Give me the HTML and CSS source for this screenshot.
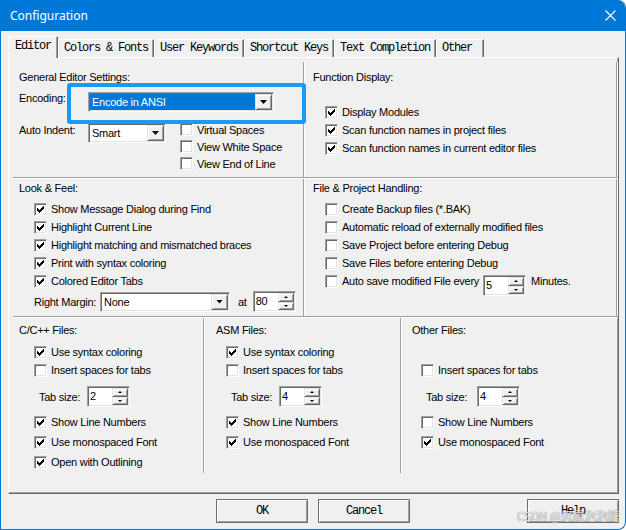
FILE: index.html
```html
<!DOCTYPE html>
<html>
<head>
<meta charset="utf-8">
<title>Configuration</title>
<link rel="stylesheet" href="styles.css">
</head>
<body>
<svg class="defs" width="0" height="0">
    <symbol id="tick" viewBox="0 0 13 13">
        <path d="M3 5h1v1h1v1h1v-1h1v-1h1v-1h1v-1h1v3h-1v1h-1v1h-1v1h-1v1h-1v-1h-1v-1h-1z"/>
    </symbol>
</svg>
<div class="window">
    <div class="titlebar">
        <span>Configuration</span>
        <svg class="close" width="11" height="11" viewBox="0 0 11 11"><path d="M0.5 0.5L10.5 10.5M10.5 0.5L0.5 10.5"/></svg>
    </div>
    <div class="tabs">
        <div class="tab active">Editor</div>
        <div class="tab">Colors &amp; Fonts</div>
        <div class="tab">User Keywords</div>
        <div class="tab">Shortcut Keys</div>
        <div class="tab">Text Completion</div>
        <div class="tab last">Other</div>
    </div>
    <div class="page">
        <div class="row row-top">
            <div class="cell half-left general">
                <div class="heading">General Editor Settings:</div>
                <div class="field enc">
                    <span class="lbl">Encoding:</span>
                    <div class="combo w-enc"><span class="combo-val sel">Encode in ANSI</span><span class="drop"><i class="arrow"></i></span></div>
                </div>
                <div class="field indent">
                    <span class="lbl">Auto Indent:</span>
                    <div class="combo w-indent"><span class="combo-val">Smart</span><span class="drop"><i class="arrow"></i></span></div>
                    <div class="opts tight">
                        <div class="opt"><span class="cb"></span>Virtual Spaces</div>
                        <div class="opt"><span class="cb"></span>View White Space</div>
                        <div class="opt"><span class="cb"></span>View End of Line</div>
                    </div>
                </div>
            </div>
            <div class="cell half-right funcs">
                <div class="heading">Function Display:</div>
                <div class="opts">
                    <div class="opt"><span class="cb"><svg viewBox="0 0 13 13"><use href="#tick"/></svg></span>Display Modules</div>
                    <div class="opt"><span class="cb"><svg viewBox="0 0 13 13"><use href="#tick"/></svg></span>Scan function names in project files</div>
                    <div class="opt"><span class="cb"><svg viewBox="0 0 13 13"><use href="#tick"/></svg></span>Scan function names in current editor files</div>
                </div>
            </div>
        </div>
        <div class="row row-mid">
            <div class="cell half-left look">
                <div class="heading">Look &amp; Feel:</div>
                <div class="opts">
                    <div class="opt"><span class="cb"><svg viewBox="0 0 13 13"><use href="#tick"/></svg></span>Show Message Dialog during Find</div>
                    <div class="opt"><span class="cb"><svg viewBox="0 0 13 13"><use href="#tick"/></svg></span>Highlight Current Line</div>
                    <div class="opt"><span class="cb"><svg viewBox="0 0 13 13"><use href="#tick"/></svg></span>Highlight matching and mismatched braces</div>
                    <div class="opt"><span class="cb"><svg viewBox="0 0 13 13"><use href="#tick"/></svg></span>Print with syntax coloring</div>
                    <div class="opt"><span class="cb"><svg viewBox="0 0 13 13"><use href="#tick"/></svg></span>Colored Editor Tabs</div>
                </div>
                <div class="margin-line">
                    <span class="lbl">Right Margin:</span>
                    <div class="combo w-margin"><span class="combo-val">None</span><span class="drop"><i class="arrow"></i></span></div>
                    <span class="at">at</span>
                    <div class="spin"><span class="spin-val">80</span><span class="spin-btns"><span><i class="up"></i></span><span><i class="down"></i></span></span></div>
                </div>
            </div>
            <div class="cell half-right files">
                <div class="heading">File &amp; Project Handling:</div>
                <div class="opts">
                    <div class="opt"><span class="cb"></span>Create Backup files (*.BAK)</div>
                    <div class="opt"><span class="cb"></span>Automatic reload of externally modified files</div>
                    <div class="opt"><span class="cb"></span>Save Project before entering Debug</div>
                    <div class="opt"><span class="cb"></span>Save Files before entering Debug</div>
                    <div class="opt autosave"><span class="cb"></span>Auto save modified File every
                        <div class="spin"><span class="spin-val">5</span><span class="spin-btns"><span><i class="up"></i></span><span><i class="down"></i></span></span></div>
                        <span class="unit">Minutes.</span>
                    </div>
                </div>
            </div>
        </div>
        <div class="row row-bottom">
            <div class="cell lang c-cpp">
                <div class="heading">C/C++ Files:</div>
                <div class="opts">
                    <div class="opt"><span class="cb"><svg viewBox="0 0 13 13"><use href="#tick"/></svg></span>Use syntax coloring</div>
                    <div class="opt"><span class="cb"></span>Insert spaces for tabs</div>
                </div>
                <div class="tabline">
                    <span class="lbl">Tab size:</span>
                    <div class="spin"><span class="spin-val">2</span><span class="spin-btns"><span><i class="up"></i></span><span><i class="down"></i></span></span></div>
                </div>
                <div class="opts wide">
                    <div class="opt"><span class="cb"><svg viewBox="0 0 13 13"><use href="#tick"/></svg></span>Show Line Numbers</div>
                    <div class="opt"><span class="cb"><svg viewBox="0 0 13 13"><use href="#tick"/></svg></span>Use monospaced Font</div>
                    <div class="opt"><span class="cb"><svg viewBox="0 0 13 13"><use href="#tick"/></svg></span>Open with Outlining</div>
                </div>
            </div>
            <div class="cell lang c-asm">
                <div class="heading">ASM Files:</div>
                <div class="opts">
                    <div class="opt"><span class="cb"><svg viewBox="0 0 13 13"><use href="#tick"/></svg></span>Use syntax coloring</div>
                    <div class="opt"><span class="cb"></span>Insert spaces for tabs</div>
                </div>
                <div class="tabline">
                    <span class="lbl">Tab size:</span>
                    <div class="spin"><span class="spin-val">4</span><span class="spin-btns"><span><i class="up"></i></span><span><i class="down"></i></span></span></div>
                </div>
                <div class="opts wide">
                    <div class="opt"><span class="cb"><svg viewBox="0 0 13 13"><use href="#tick"/></svg></span>Show Line Numbers</div>
                    <div class="opt"><span class="cb"><svg viewBox="0 0 13 13"><use href="#tick"/></svg></span>Use monospaced Font</div>
                </div>
            </div>
            <div class="cell lang c-other">
                <div class="heading">Other Files:</div>
                <div class="opts skip">
                    <div class="opt"><span class="cb"></span>Insert spaces for tabs</div>
                </div>
                <div class="tabline">
                    <span class="lbl">Tab size:</span>
                    <div class="spin"><span class="spin-val">4</span><span class="spin-btns"><span><i class="up"></i></span><span><i class="down"></i></span></span></div>
                </div>
                <div class="opts wide">
                    <div class="opt"><span class="cb"></span>Show Line Numbers</div>
                    <div class="opt"><span class="cb"><svg viewBox="0 0 13 13"><use href="#tick"/></svg></span>Use monospaced Font</div>
                </div>
            </div>
        </div>
    </div>
    <div class="buttons">
        <button class="btn">OK</button>
        <button class="btn">Cancel</button>
        <button class="btn help">Help</button>
    </div>
    <div class="callout"></div>
    <div class="watermark">CSDN @思露泡泡糖</div>
</div>
</body>
</html>
```

FILE: styles.css
```css
* {
    box-sizing: border-box;
}
html, body {
    margin: 0;
    padding: 0;
}
body {
    width: 626px;
    height: 530px;
    overflow: hidden;
    background: #fff;
    color: #000;
    font-family: "Liberation Sans", Arial, sans-serif;
    font-size: 11px;
    letter-spacing: -0.25px;
}
.defs {
    position: absolute;
}

.window {
    position: relative;
    width: 626px;
    height: 530px;
    display: flex;
    flex-direction: column;
    background: #f0f0f0;
    border: 1px solid #0078d7;
    border-top: 0;
    border-radius: 0 8px 8px 0;
    overflow: hidden;
}
.titlebar {
    height: 31px;
    flex: none;
    display: flex;
    align-items: center;
    justify-content: space-between;
    padding: 0 9px;
    background: #0078d7;
    color: #fff;
    font-family: "Noto Sans", sans-serif;
    font-size: 12px;
    letter-spacing: 0;
}
.close path {
    stroke: #fff;
    stroke-width: 1.1;
}

/* tab strip */
.tabs {
    display: flex;
    align-items: flex-end;
    height: 21px;
    margin-top: 5px;
    padding-left: 7px;
    font-family: "Liberation Mono", "Courier New", monospace;
    font-size: 12px;
    letter-spacing: -1.2px;
}
.tab {
    height: 18px;
    padding: 0 5px;
    line-height: 17px;
    white-space: nowrap;
    border: 1px solid;
    border-color: #fff #696969 transparent #fff;
    border-bottom: 0;
    box-shadow: inset -1px 0 #a0a0a0;
}
.tab.active {
    position: relative;
    z-index: 1;
    height: 22px;
    margin-bottom: -1px;
    padding: 1px 6px 0;
    background: #f0f0f0;
}
.tab.last {
    padding-right: 11px;
}

/* property page */
.page {
    width: 611px;
    height: 437px;
    flex: none;
    margin-left: 7px;
    padding: 4px 0 0 4px;
    border: 1px solid;
    border-color: #fff #696969 #696969 #fff;
    box-shadow: inset -1px -1px #a0a0a0;
}
.row {
    display: flex;
    margin-bottom: 1px;
    border-bottom: 1px solid #a0a0a0;
    box-shadow: 0 1px #fff;
}
.row-top {
    height: 116px;
}
.row-mid {
    height: 138px;
}
.row-bottom {
    height: 155px;
    border-bottom: 0;
    box-shadow: none;
}
.cell {
    flex: none;
    margin-right: 1px;
    border-right: 1px solid #a0a0a0;
    box-shadow: 1px 0 #fff;
}
.half-left {
    width: 291px;
}
.half-right {
    width: 312px;
}
.c-cpp {
    width: 191px;
}
.c-asm {
    width: 196px;
}
.c-other {
    flex: 1;
    margin-right: 0;
    border-right: 0;
    box-shadow: none;
}
.heading {
    height: 18px;
    line-height: 18px;
    white-space: nowrap;
}
.lbl {
    flex: none;
    white-space: nowrap;
}

/* checkboxes */
.opt {
    display: flex;
    align-items: center;
    height: 18px;
    white-space: nowrap;
}
.cb {
    flex: none;
    width: 13px;
    height: 13px;
    margin-right: 4px;
    background: #fff;
    border: 1px solid;
    border-color: #a0a0a0 #fff #fff #a0a0a0;
    box-shadow: inset 1px 1px #696969, inset -1px -1px #e3e3e3;
}
.cb svg {
    display: block;
    width: 13px;
    height: 13px;
    margin: -1px;
    fill: #000;
}
.tight .opt {
    height: 17px;
}
.wide {
    margin-top: 5px;
}
.wide .opt {
    height: 20px;
}

/* combo boxes and spinners */
.combo, .spin {
    flex: none;
    display: flex;
    padding: 1px;
    background: #fff;
    border: 1px solid;
    border-color: #a0a0a0 #fff #fff #a0a0a0;
    box-shadow: inset 1px 1px #696969, inset -1px -1px #e3e3e3;
}
.combo {
    height: 20px;
}
.combo-val {
    flex: 1;
    padding-left: 2px;
    line-height: 16px;
    white-space: nowrap;
}
.combo-val.sel {
    background: #0078d7;
    color: #fff;
}
.drop, .spin-btns span {
    display: flex;
    align-items: center;
    justify-content: center;
    background: #f0f0f0;
    border: 1px solid;
    border-color: #e3e3e3 #696969 #696969 #e3e3e3;
    box-shadow: inset 1px 1px #fff, inset -1px -1px #a0a0a0;
}
.drop {
    width: 17px;
    flex: none;
}
.arrow {
    width: 7px;
    height: 4px;
    background: #000;
    clip-path: polygon(0 0, 7px 0, 3.5px 4px);
}
.w-enc {
    width: 186px;
}
.w-indent {
    width: 78px;
}
.w-margin {
    width: 130px;
}
.spin {
    width: 43px;
    height: 21px;
}
.spin-val {
    flex: 1;
    padding-left: 1px;
    line-height: 17px;
}
.spin-btns {
    width: 16px;
    display: flex;
    flex-direction: column;
}
.spin-btns span {
    flex: 1;
}
.up, .down {
    width: 0;
    height: 0;
    border-left: 2px solid transparent;
    border-right: 2px solid transparent;
}
.up {
    border-bottom: 2px solid #000;
}
.down {
    border-top: 2px solid #000;
}

/* General Editor Settings */
.general {
    padding: 6px 0 0 6px;
}
.field {
    display: flex;
    align-items: flex-start;
}
.field .lbl {
    width: 69px;
    line-height: 14px;
}
.enc {
    margin-top: 6px;
}
.enc .lbl {
    margin-top: -1px;
}
.indent {
    margin-top: 11px;
}
.indent .opts {
    margin: -2px 0 0 14px;
}

/* Function Display */
.funcs {
    padding: 6px 0 0 8px;
}
.funcs .opts {
    margin-top: 17px;
    padding-left: 12px;
}

/* Look & Feel */
.look {
    padding-left: 6px;
}
.look .opts {
    margin-top: 3px;
    padding-left: 15px;
}
.margin-line {
    display: flex;
    align-items: center;
    height: 21px;
    margin-top: 1px;
    padding-left: 15px;
}
.margin-line .lbl {
    width: 66px;
}
.at {
    margin: 0 6px 0 8px;
}

/* File & Project Handling */
.files {
    padding-left: 8px;
}
.files .opts {
    margin-top: 3px;
    padding-left: 12px;
}
.autosave .spin {
    align-self: flex-start;
    margin: 3px 0 0 4px;
}
.autosave .unit {
    margin-left: 5px;
}

/* per-language file settings */
.lang {
    padding-top: 3px;
}
.lang .opts {
    margin-top: 4px;
}
.lang .wide {
    margin-top: 5px;
}
.lang .skip {
    margin-top: 22px;
}
.tabline {
    display: flex;
    align-items: center;
    height: 21px;
    margin-top: 7px;
}
.tabline .lbl {
    width: 48px;
}
.c-cpp {
    padding-left: 6px;
}
.c-cpp .opts {
    padding-left: 15px;
}
.c-cpp .tabline {
    padding-left: 20px;
}
.c-asm {
    padding-left: 11px;
}
.c-asm .opts {
    padding-left: 10px;
}
.c-asm .tabline {
    padding-left: 15px;
}
.c-other {
    padding-left: 10px;
}
.c-other .opts {
    padding-left: 9px;
}
.c-other .tabline {
    padding-left: 14px;
}
.c-other .tabline .lbl {
    width: 51px;
}

/* dialog buttons */
.buttons {
    display: flex;
    gap: 10px;
    padding: 5px 6px 0 215px;
}
.btn {
    width: 92px;
    height: 24px;
    padding: 0;
    background: #f0f0f0;
    color: #000;
    font-family: "Liberation Mono", "Courier New", monospace;
    font-size: 12px;
    letter-spacing: -1.2px;
    border: 1px solid #6f6f6f;
    box-shadow: inset 1px 1px #fff, inset -1px -1px #a0a0a0;
}
.btn.help {
    margin-left: auto;
}

/* highlight frame drawn over the encoding row */
.callout {
    position: absolute;
    left: 66px;
    top: 83px;
    width: 239px;
    height: 41px;
    border: 4px solid #1a9af5;
    border-radius: 3px;
}
.watermark {
    position: absolute;
    left: 516px;
    top: 509px;
    font-family: "Noto Sans CJK SC", sans-serif;
    font-size: 12px;
    line-height: 14px;
    letter-spacing: -0.3px;
    color: rgba(255, 255, 255, 0.85);
    text-shadow: 0 0 1px rgba(0, 0, 0, 0.7);
    white-space: nowrap;
}
```
